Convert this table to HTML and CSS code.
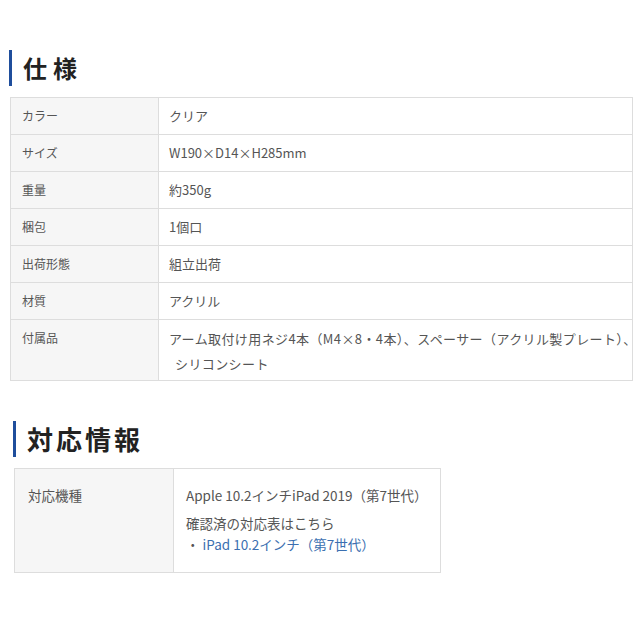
FILE: index.html
```html
<!DOCTYPE html>
<html lang="ja">
<head>
<meta charset="utf-8">
<title>仕様</title>
<link rel="stylesheet" href="styles.css">
</head>
<body>
<section class="spec">
  <h2 class="heading heading-spec">仕様</h2>
  <table class="spec-table">
    <tr><th>カラー</th><td>クリア</td></tr>
    <tr><th>サイズ</th><td>W190×D14×H285mm</td></tr>
    <tr><th>重量</th><td>約350g</td></tr>
    <tr><th>梱包</th><td>1個口</td></tr>
    <tr><th>出荷形態</th><td>組立出荷</td></tr>
    <tr><th>材質</th><td>アクリル</td></tr>
    <tr class="multi"><th>付属品</th><td>アーム取付け用ネジ4本（M4×8・4本）、スペーサー（アクリル製プレート）、<br><span class="indent">シリコンシート</span></td></tr>
  </table>
</section>
<section class="compat">
  <h2 class="heading heading-compat">対応情報</h2>
  <table class="compat-table">
    <tr>
      <th>対応機種</th>
      <td>
        <p class="model">Apple 10.2インチiPad 2019（第7世代）</p>
        <p class="note">確認済の対応表はこちら</p>
        <p class="link-line">・ <a href="#">iPad 10.2インチ（第7世代）</a></p>
      </td>
    </tr>
  </table>
</section>
</body>
</html>
```
FILE: styles.css
```css
html, body {
  margin: 0;
  padding: 0;
  background: #ffffff;
}
body {
  font-family: "Noto Sans CJK JP", "Noto Sans", sans-serif;
  color: #555555;
  width: 640px;
}
.spec {
  padding: 50px 7px 0 9px;
}
.heading {
  margin: 0;
  border-left: 3px solid #1f4e9c;
  height: 36px;
  line-height: 36px;
  color: #222222;
  font-weight: 700;
}
.heading-spec {
  font-size: 24px;
  letter-spacing: 6px;
  padding-left: 11px;
  margin-bottom: 11px;
}
.spec-table {
  margin-left: 1px;
  width: 623px;
  border-collapse: collapse;
  table-layout: fixed;
  font-size: 12px;
}
.spec-table th,
.spec-table td {
  border: 1px solid #dddddd;
  height: 24px;
  padding: 6px 11px;
  line-height: 24px;
  text-align: left;
  vertical-align: top;
  font-weight: 400;
}
.spec-table th {
  width: 125px;
  background: #f6f6f6;
  color: #555555;
}
.spec-table td {
  padding-left: 10px;
  font-size: 13px;
  white-space: nowrap;
}
.spec-table .multi td {
  line-height: 25px;
  padding-bottom: 4px;
  letter-spacing: 0.4px;
}
.indent {
  padding-left: 6px;
}
.compat {
  padding: 40px 0 0 13px;
}
.heading-compat {
  font-size: 26px;
  letter-spacing: 3px;
  padding-left: 11px;
  margin-bottom: 11px;
}
.compat-table {
  margin-left: 1px;
  width: 427px;
  border-collapse: collapse;
  font-size: 13.5px;
}
.compat-table th,
.compat-table td {
  border: 1px solid #dddddd;
  text-align: left;
  vertical-align: top;
  font-weight: 400;
  line-height: 21px;
  padding: 16px 12px 17px;
}
.compat-table th {
  width: 133px;
  padding-left: 13px;
  background: #f6f6f6;
}
.compat-table p {
  margin: 0;
}
.compat-table .model {
  margin-bottom: 7px;
}
.compat-table a {
  color: #3b6fb0;
  text-decoration: none;
}
```
